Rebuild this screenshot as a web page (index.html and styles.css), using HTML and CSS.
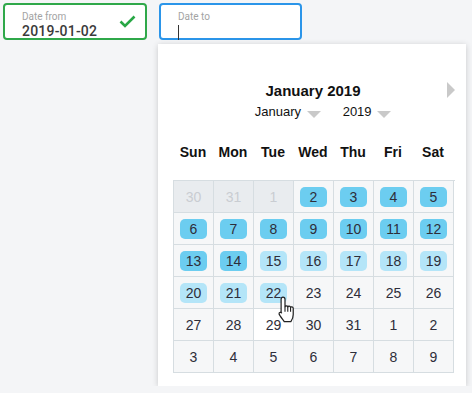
FILE: index.html
```html
<!DOCTYPE html>
<html lang="en">
<head>
    <meta charset="UTF-8">
    <title>Date range</title>
    <link rel="stylesheet" href="styles.css">
</head>
<body>
    <div class="fields">
        <div class="field valid">
            <span class="label">Date from</span>
            <span class="value">2019-01-02</span>
            <svg class="check" width="17" height="13" viewBox="0 0 17 13"><path d="M1.5 6.5 L6 11 L15.5 1.5" fill="none" stroke="#28a745" stroke-width="2.6"/></svg>
        </div>
        <div class="field focus">
            <span class="label">Date to</span>
            <span class="value"><span class="caret"></span></span>
        </div>
    </div>

    <div class="picker">
        <div class="head">
            <div class="title">January 2019</div>
            <span class="next"></span>
        </div>
        <div class="selects">
            <span class="sel">January <i class="tri"></i></span>
            <span class="sel">2019 <i class="tri"></i></span>
        </div>
        <div class="weekdays">
            <span>Sun</span><span>Mon</span><span>Tue</span><span>Wed</span><span>Thu</span><span>Fri</span><span>Sat</span>
        </div>
        <div class="grid">
            <div class="day out">30</div>
            <div class="day out">31</div>
            <div class="day out">1</div>
            <div class="day"><b class="sel-d">2</b></div>
            <div class="day"><b class="sel-d">3</b></div>
            <div class="day"><b class="sel-d">4</b></div>
            <div class="day"><b class="sel-d">5</b></div>

            <div class="day"><b class="sel-d">6</b></div>
            <div class="day"><b class="sel-d">7</b></div>
            <div class="day"><b class="sel-d">8</b></div>
            <div class="day"><b class="sel-d">9</b></div>
            <div class="day"><b class="sel-d">10</b></div>
            <div class="day"><b class="sel-d">11</b></div>
            <div class="day"><b class="sel-d">12</b></div>

            <div class="day"><b class="sel-d">13</b></div>
            <div class="day"><b class="sel-d">14</b></div>
            <div class="day"><b class="range">15</b></div>
            <div class="day"><b class="range">16</b></div>
            <div class="day"><b class="range">17</b></div>
            <div class="day"><b class="range">18</b></div>
            <div class="day"><b class="range">19</b></div>

            <div class="day"><b class="range">20</b></div>
            <div class="day"><b class="range">21</b></div>
            <div class="day"><b class="range">22</b></div>
            <div class="day">23</div>
            <div class="day">24</div>
            <div class="day">25</div>
            <div class="day">26</div>

            <div class="day">27</div>
            <div class="day">28</div>
            <div class="day hover">29</div>
            <div class="day">30</div>
            <div class="day">31</div>
            <div class="day">1</div>
            <div class="day">2</div>

            <div class="day">3</div>
            <div class="day">4</div>
            <div class="day">5</div>
            <div class="day">6</div>
            <div class="day">7</div>
            <div class="day">8</div>
            <div class="day">9</div>
        </div>
        <svg class="cursor" width="20" height="30" viewBox="0 0 18 26">
            <path d="M4.5 1.5 C5.7 1.5 6.3 2.2 6.3 3.4 L6.3 10 C6.6 9.2 8.4 9 8.8 10.2 C9.2 9.3 11 9.3 11.3 10.6 C11.7 9.9 13.6 10 13.7 11.5 L13.7 17 C13.7 20 12.6 22 11.6 23.5 L5.6 23.5 C4.5 21.8 1.3 17.8 1 16.6 C0.7 15.3 2.2 14.6 3.2 15.6 L2.8 15 L2.8 3.4 C2.8 2.2 3.4 1.5 4.5 1.5 Z" fill="#fff" stroke="#222" stroke-width="1.1" stroke-linejoin="round"/>
            <path d="M6.3 10 L6.3 14.5 M8.8 10.3 L8.8 14.5 M11.3 10.6 L11.3 14.5" stroke="#222" stroke-width="1" fill="none"/>
        </svg>
    </div>
</body>
</html>
```

FILE: styles.css
```css
body {
    margin: 0;
    background: #f4f5f7;
    font-family: 'Liberation Sans', Arial, sans-serif;
    color: #333;
}
.fields {
    display: flex;
    gap: 12px;
    padding: 3px 0 0 3px;
}
.field {
    position: relative;
    box-sizing: border-box;
    height: 37px;
    background: #fff;
    border: 2px solid #ccc;
    border-radius: 4px;
    padding: 6px 0 0 17px;
    font-family: Roboto, 'Liberation Sans', sans-serif;
}
.field.valid { width: 144px; border-color: #2fa84a; }
.field.focus { width: 143px; border-color: #2b95e9; }
.label {
    display: block;
    font-size: 10px;
    line-height: 12px;
    color: #a3a3a3;
}
.value {
    display: block;
    font-size: 14px;
    line-height: 16px;
    font-weight: 500;
    color: #3a3a3a;
    letter-spacing: 0.2px;
}
.caret {
    display: inline-block;
    width: 1px;
    height: 15px;
    margin-top: 2px;
    background: #333;
    vertical-align: top;
}
.check {
    position: absolute;
    right: 9px;
    top: 10px;
}
.picker {
    position: relative;
    box-sizing: border-box;
    width: 308px;
    height: 342px;
    margin: 4px 0 0 158px;
    padding: 38px 13px 0 15px;
    background: #fff;
    box-shadow: 0 1px 6px rgba(0, 0, 0, 0.18);
}
.head {
    position: relative;
    height: 18px;
}
.title {
    text-align: center;
    font-size: 15px;
    line-height: 18px;
    font-weight: bold;
    color: #111;
}
.next {
    position: absolute;
    right: -2px;
    top: 0;
    width: 0;
    height: 0;
    border-top: 8px solid transparent;
    border-bottom: 8px solid transparent;
    border-left: 8px solid #c9c9c9;
}
.selects {
    display: flex;
    justify-content: center;
    gap: 22px;
    padding: 4px 0 0 20px;
    font-size: 13px;
    line-height: 16px;
    color: #111;
}
.tri {
    display: inline-block;
    width: 0;
    height: 0;
    margin-left: 2px;
    border-left: 7px solid transparent;
    border-right: 7px solid transparent;
    border-top: 7px solid #c9c9c9;
    vertical-align: -2px;
}
.weekdays {
    display: grid;
    grid-template-columns: repeat(7, 40px);
    padding: 24px 0 20px;
    font-size: 14px;
    line-height: 16px;
    font-weight: bold;
    color: #111;
    text-align: center;
}
.grid {
    display: grid;
    grid-template-columns: repeat(7, 40px);
    grid-auto-rows: 32px;
    width: 281px;
    border-left: 1px solid #d6dde1;
    border-top: 1px solid #d6dde1;
}
.day {
    display: flex;
    align-items: center;
    justify-content: center;
    border-right: 1px solid #d6dde1;
    border-bottom: 1px solid #d6dde1;
    background: #f6f7f8;
    font-size: 14px;
    color: #2e2e3a;
}
.day.out {
    background: #e9ecef;
    color: #c9cdd2;
}
.day.hover { background: #fff; }
.day b {
    display: flex;
    align-items: center;
    justify-content: center;
    width: 27px;
    height: 20px;
    border-radius: 5px;
    font-weight: normal;
}
.sel-d { background: #6ccdf0; }
.range { background: #b4e5f8; }
.cursor {
    position: absolute;
    left: 120px;
    top: 251px;
}
```
